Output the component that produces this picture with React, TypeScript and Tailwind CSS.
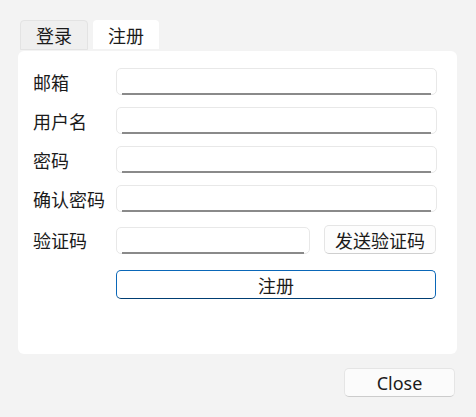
import React from 'react'

const cjk = { fontFamily: '"Noto Sans CJK SC", "Noto Sans", sans-serif' }

function Field({ className = '' }: { className?: string }) {
  return (
    <div className={`relative h-[27px] rounded-[5px] border border-[#e8e8e8] bg-white ${className}`}>
      <span className="absolute bottom-[-1px] left-[5px] right-[5px] h-[2px] bg-[#8a8a8a]" />
    </div>
  )
}

function Row({ label }: { label: string }) {
  return (
    <div className="flex h-[27px] items-center">
      <div className="w-[83px] text-[18px] leading-none text-[#1b1b1b]">{label}</div>
      <Field className="w-[321px]" />
    </div>
  )
}

export default function App() {
  return (
    <div className="relative h-[417px] w-[476px] overflow-hidden bg-[#f3f3f3]" style={cjk}>
      <div className="flex pl-[20px] pt-[20px]">
        <div className="flex h-[30px] w-[68px] items-center justify-center rounded-t-[4px] border border-[#e3e3e3] bg-[#efefef] text-[18px] leading-none text-[#1b1b1b]">
          登录
        </div>
        <div className="ml-[5px] flex h-[29px] w-[66px] items-center justify-center rounded-t-[4px] bg-white text-[18px] leading-none text-[#1b1b1b]">
          注册
        </div>
      </div>

      <div className="ml-[18px] mt-[1px] h-[303px] w-[439px] rounded-[6px] bg-white pl-[15px] pt-[17px]">
        <div className="flex flex-col gap-[12px]">
          <Row label="邮箱" />
          <Row label="用户名" />
          <Row label="密码" />
          <Row label="确认密码" />
        </div>

        <div className="mt-[13px] flex h-[29px] items-center">
          <div className="w-[83px] text-[18px] leading-none text-[#1b1b1b]">验证码</div>
          <Field className="mt-[1px] w-[194px]" />
          <button className="ml-[14px] flex h-[29px] w-[112px] items-center justify-center rounded-[5px] border border-[#e5e5e5] border-b-[#cfcfcf] bg-[#fdfdfd] text-[18px] leading-none text-[#1b1b1b]">
            发送验证码
          </button>
        </div>

        <div className="mt-[16px] pl-[83px]">
          <button className="flex h-[29px] w-[320px] items-center justify-center rounded-[5px] border border-[#0a67b8] border-b-[#003e73] bg-white text-[18px] leading-none text-[#1b1b1b]">
            注册
          </button>
        </div>
      </div>

      <div className="mt-[14px] flex justify-end pr-[21px]">
        <button
          className="flex h-[29px] w-[111px] items-center justify-center rounded-[5px] border border-[#e5e5e5] border-b-[#cccccc] bg-[#fbfbfb] text-[18px] leading-none text-[#1b1b1b]"
          style={{ fontFamily: '"Noto Sans", sans-serif' }}
        >
          Close
        </button>
      </div>
    </div>
  )
}
